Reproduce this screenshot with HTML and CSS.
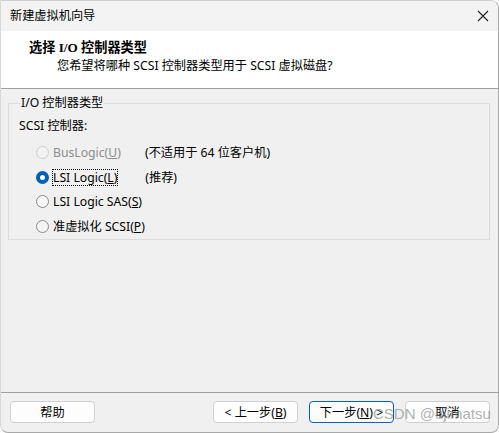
FILE: index.html
```html
<!DOCTYPE html>
<html lang="zh-CN">
<head>
    <meta charset="UTF-8">
    <title>新建虚拟机向导</title>
    <link rel="stylesheet" href="styles.css">
</head>
<body>
    <div class="window">
        <div class="titlebar">
            <span>新建虚拟机向导</span>
            <svg class="close" width="12" height="12" viewBox="0 0 12 12">
                <path d="M1 1 L11 11 M11 1 L1 11" stroke="#222" stroke-width="1.1" fill="none"/>
            </svg>
        </div>

        <div class="header">
            <div class="header-title">选择 I/O 控制器类型</div>
            <div class="header-sub">您希望将哪种 SCSI 控制器类型用于 SCSI 虚拟磁盘?</div>
        </div>

        <div class="content">
            <fieldset class="group">
                <legend>I/O 控制器类型</legend>
                <div class="caption">SCSI 控制器:</div>

                <div class="option disabled">
                    <span class="radio"></span>
                    <span class="label">BusLogic(<u>U</u>)</span>
                    <span class="note">(不适用于 64 位客户机)</span>
                </div>
                <div class="option">
                    <span class="radio checked"></span>
                    <span class="label focus">LSI Logic(<u>L</u>)</span>
                    <span class="note">(推荐)</span>
                </div>
                <div class="option">
                    <span class="radio"></span>
                    <span class="label">LSI Logic SAS(<u>S</u>)</span>
                </div>
                <div class="option">
                    <span class="radio"></span>
                    <span class="label">准虚拟化 SCSI(<u>P</u>)</span>
                </div>
            </fieldset>
        </div>

        <div class="footer">
            <button class="btn">帮助</button>
            <div class="spacer"></div>
            <button class="btn">&lt; 上一步(<u>B</u>)</button>
            <button class="btn default">下一步(<u>N</u>) &gt;</button>
            <button class="btn">取消</button>
            <span class="watermark">CSDN @ujimatsu</span>
        </div>
    </div>
</body>
</html>
```

FILE: styles.css
```css
* {
    box-sizing: border-box;
}
body {
    margin: 0;
    background-color: #ffffff;
    font-family: "Noto Sans", "Noto Sans CJK SC", sans-serif;
    font-size: 12.2px;
    color: #000;
}
.window {
    width: 499px;
    height: 433px;
    border: 1px solid #a8a8a8;
    border-left-color: #d8d8d8;
    border-top-color: #d0d0d0;
    border-radius: 0 8px 8px 8px;
    background-color: #f0f0f0;
    overflow: hidden;
    display: flex;
    flex-direction: column;
    position: relative;
}
.titlebar {
    height: 30px;
    background-color: #f3f3f3;
    display: flex;
    align-items: center;
    justify-content: space-between;
    padding: 0 8px 0 9px;
    line-height: 1;
}
.close {
    margin-right: 1px;
}
.header {
    height: 58px;
    background-color: #ffffff;
    border-bottom: 1px solid #a0a0a0;
    padding-top: 8px;
    line-height: 18px;
}
.header-title {
    padding-left: 28px;
    font-weight: bold;
    font-family: "Liberation Serif", "Noto Sans CJK SC", serif;
    font-size: 13.2px;
}
.header-sub {
    padding-left: 56px;
}
.content {
    flex: 1;
    padding: 6px 8px 0 7px;
}
.group {
    margin: 0;
    height: 145px;
    border: 1px solid #dcdcdc;
    padding: 7px 0 0 10px;
}
.group legend {
    padding: 0 1px;
    margin-left: 1px;
    line-height: 16px;
}
.caption {
    margin-bottom: 6px;
    line-height: 16px;
}
.option {
    display: flex;
    align-items: center;
    height: 24.7px;
    padding-left: 17px;
}
.radio {
    width: 13px;
    height: 13px;
    border-radius: 50%;
    border: 1px solid #8a8a8a;
    background-color: #f6f6f6;
    margin-right: 3px;
    flex-shrink: 0;
}
.radio.checked {
    border: 4px solid #005fb8;
    background-color: #ffffff;
}
.disabled .radio {
    border-color: #cfcfcf;
    background-color: #f3f3f3;
}
.disabled .label {
    color: #8d8d8d;
}
.label {
    width: 93px;
    white-space: nowrap;
    padding: 0 1px;
}
.label.focus {
    outline: 1px dotted #000;
    outline-offset: -1px;
    width: auto;
    margin-right: 27px;
}
.note {
    white-space: nowrap;
}
.footer {
    height: 40px;
    border-top: 1px solid #a0a0a0;
    display: flex;
    align-items: flex-start;
    padding: 8px 8px 0 9px;
    gap: 11px;
    position: relative;
}
.spacer {
    flex: 1;
}
.btn {
    width: 85px;
    height: 22px;
    border: 1px solid #d0d0d0;
    border-radius: 4px;
    background-color: #fdfdfd;
    font-family: inherit;
    font-size: 12.2px;
    padding: 0;
    color: #000;
}
.btn.default {
    border-color: #005fb8;
}
.watermark {
    position: absolute;
    left: 372px;
    top: 12px;
    color: rgba(150, 150, 150, 0.75);
    font-family: "Liberation Sans", sans-serif;
    font-size: 15px;
    pointer-events: none;
}
```
